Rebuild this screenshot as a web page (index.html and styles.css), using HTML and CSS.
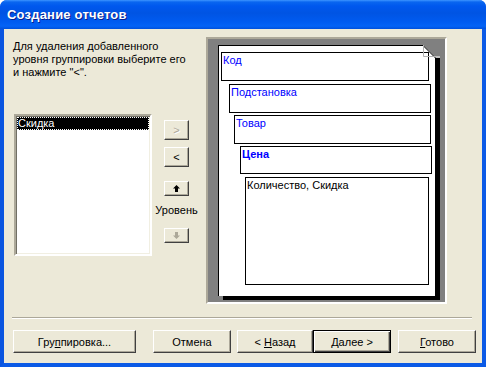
FILE: index.html
```html
<!DOCTYPE html>
<html lang="ru">
<head>
<meta charset="utf-8">
<title>Создание отчетов</title>
<link rel="stylesheet" href="styles.css">
</head>
<body>
<div class="window">
  <div class="titlebar"><span class="title">Создание отчетов</span></div>
  <div class="client">
    <div class="main">
      <div class="left">
        <p class="hint">Для удаления добавленного<br>уровня группировки выберите его<br>и нажмите "&lt;".</p>
        <div class="listbox">
          <div class="item selected">Скидка</div>
        </div>
      </div>
      <div class="mid">
        <div class="btn small disabled"><span>&gt;</span></div>
        <div class="btn small gap1"><span>&lt;</span></div>
        <div class="btn arrow gap2">
          <svg width="7" height="7" viewBox="0 0 7 7"><polygon points="3.5,0 7,3.5 5,3.5 5,7 2,7 2,3.5 0,3.5" fill="#000"/></svg>
        </div>
        <div class="level">Уровень</div>
        <div class="btn arrow gap3">
          <svg width="7" height="7" viewBox="0 0 7 7"><polygon points="3.5,7 7,3.5 5,3.5 5,0 2,0 2,3.5 0,3.5" fill="#aca899"/></svg>
        </div>
      </div>
      <div class="preview">
        <div class="page">
          <svg class="fold" width="17" height="13" viewBox="0 0 17 13">
            <polygon points="0,0 17,0 17,13 12,13 12,12" fill="#808080"/>
            <polygon points="12,11 17,11 17,13 12,13" fill="#c0c0c0"/>
            <path d="M0 0.5 L12.5 13" stroke="#000" stroke-width="1" fill="none"/>
            <path d="M0.5 0 V11.5 H12" stroke="#b0b0b0" stroke-width="1" fill="none"/>
          </svg>
          <div class="grp g1">Код</div>
          <div class="grp g2">Подстановка</div>
          <div class="grp g3">Товар</div>
          <div class="grp g4"><b>Цена</b></div>
          <div class="grp g5">Количество, Скидка</div>
        </div>
      </div>
    </div>
    <div class="sep"></div>
    <div class="buttons">
      <div class="btn b-group"><span>Гру<u>п</u>пировка...</span></div>
      <div class="btn b-cancel"><span>Отмена</span></div>
      <div class="btn b-back"><span>&lt; <u>Н</u>азад</span></div>
      <div class="btn b-next default"><span><u>Д</u>алее &gt;</span></div>
      <div class="btn b-done"><span><u>Г</u>отово</span></div>
    </div>
  </div>
</div>
</body>
</html>
```
FILE: styles.css
```css
* { box-sizing: border-box; }
html, body { margin: 0; padding: 0; background: #fff; }
body { font-family: "Liberation Sans", Arial, sans-serif; font-size: 11px; color: #000; }

.window {
  width: 486px;
  height: 367px;
  display: flex;
  flex-direction: column;
  border-radius: 7px 7px 0 0;
  overflow: hidden;
  background: #0054e3;
}

.titlebar {
  height: 29px;
  flex: none;
  display: flex;
  align-items: center;
  padding: 0 0 1px 7px;
  background: linear-gradient(180deg, #3d95ff 0, #0a66f0 2px, #0058ee 6px, #0054e3 45%, #005bf0 75%, #0463f6 90%, #0050dc 100%);
}
.title {
  color: #fff;
  font-weight: bold;
  font-size: 13px;
  letter-spacing: 0.2px;
  text-shadow: 1px 1px 0 #0a1e8c;
}

.client {
  flex: 1;
  display: flex;
  flex-direction: column;
  background: #ece9d8;
  border: 4px solid #0b5ae6;
  border-top: none;
  border-left-color: #0a55e0;
}

.main {
  display: flex;
  padding: 8px 0 0 9px;
  height: 275px;
  flex: none;
}

.left { width: 139px; margin-top: 3px; flex: none; }
.hint { margin: 0; line-height: 13px; white-space: nowrap; }

.listbox {
  margin: 35px 0 0 1px;
  width: 138px;
  height: 142px;
  background: #fff;
  border: 2px solid;
  border-color: #aca899 #fff #fff #aca899;
  box-shadow: inset 1px 1px 0 #716f64, inset -1px -1px 0 #f1efe2;
  padding: 1px 0 0 1px;
}
.item { height: 13px; line-height: 13px; padding-left: 1px; margin-right: 1px; }
.item.selected { background: #000; color: #fff; outline: 1px dotted #fff; outline-offset: -1px; }

.mid {
  width: 25px;
  margin-left: 12px;
  padding-top: 83px;
  display: flex;
  flex-direction: column;
  align-items: center;
  flex: none;
}

.btn {
  display: flex;
  align-items: center;
  justify-content: center;
  background: #ece9d8;
  border: 1px solid;
  border-color: #fff #404040 #404040 #fff;
  box-shadow: inset -1px -1px 0 #aca899;
  white-space: nowrap;
}
.btn span { white-space: pre; }
.btn.small { width: 25px; height: 20px; flex: none; }
.btn.arrow { width: 25px; height: 15px; flex: none; }
.btn.disabled { color: #aca899; text-shadow: 1px 1px 0 #fff; }
.gap1 { margin-top: 7px; }
.gap2 { margin-top: 14px; }
.gap3 { margin-top: 11px; }
.level { margin-top: 8px; line-height: 13px; white-space: nowrap; }

.preview {
  margin-left: 17px;
  width: 241px;
  height: 267px;
  flex: none;
  border: 2px solid;
  border-color: #aca899 #fff #fff #aca899;
  background: #808080;
  padding: 6px 0 0 10px;
}
.page {
  position: relative;
  width: 217px;
  height: 251px;
  background: #fff;
  border-top: 1px solid #000;
  border-left: 1px solid #000;
  box-shadow: 5px 4px 0 #000;
  display: flex;
  flex-direction: column;
  align-items: flex-start;
}
.fold { position: absolute; top: -1px; right: -5px; display: block; }

.grp {
  border: 1px solid #000;
  color: #0000ff;
  line-height: 13px;
  padding: 1px 1px 0 1px;
  flex: none;
}
.grp b { font-weight: bold; }
.g1 { margin: 6px 0 0 2px; width: 208px; height: 29px; }
.g2 { margin: 3px 0 0 10px; width: 202px; height: 29px; }
.g3 { margin: 2px 0 0 15px; width: 197px; height: 29px; }
.g4 { margin: 2px 0 0 21px; width: 192px; height: 28px; }
.g5 { margin: 3px 0 0 26px; width: 184px; height: 108px; color: #000; }

.sep {
  margin: 13px 10px 0 8px;
  height: 2px;
  border-top: 1px solid #aca899;
  border-bottom: 1px solid #fff;
  flex: none;
}

.buttons {
  display: flex;
  margin-top: 11px;
  padding-left: 9px;
  height: 23px;
}
.buttons .btn { height: 23px; flex: none; }
.b-group { width: 123px; }
.b-cancel { width: 78px; margin-left: 17px; }
.b-back { width: 76px; margin-left: 6px; }
.b-next { width: 78px; }
.b-done { width: 78px; margin-left: 7px; }
.btn.default {
  border: 1px solid #000;
  box-shadow: inset 1px 1px 0 #fff, inset -1px -1px 0 #404040, inset -2px -2px 0 #aca899;
}
u { text-decoration: underline; text-underline-offset: 1px; }
```
